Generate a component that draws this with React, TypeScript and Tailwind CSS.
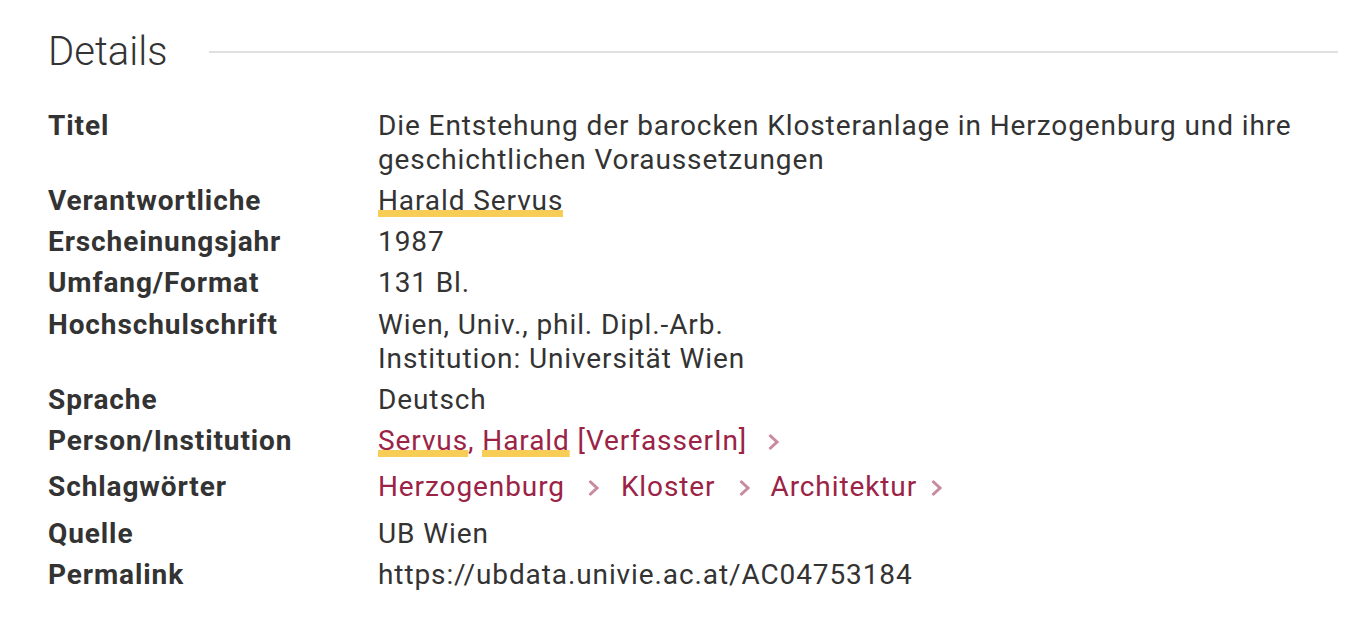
import { ReactNode } from "react";

const Chevron = ({ className = "" }: { className?: string }) => (
  <svg viewBox="0 0 13 18" className={`inline-block w-[13px] h-[18px] ${className}`} fill="none">
    <path d="M2.5 2 L10 9 L2.5 16" stroke="#c98a9d" strokeWidth="3" />
  </svg>
);

const Mark = ({ children }: { children: ReactNode }) => (
  <span className="bg-[linear-gradient(#f7cd55,#f7cd55)] bg-no-repeat bg-bottom bg-[length:100%_7px]">
    {children}
  </span>
);

const Row = ({ label, children, className = "" }: { label: string; children: ReactNode; className?: string }) => (
  <div className={`flex ${className}`}>
    <div className="w-[330px] shrink-0 font-bold">{label}</div>
    <div className="flex-1">{children}</div>
  </div>
);

export default function App() {
  return (
    <div
      className="min-h-screen bg-white pl-[48px] pr-[32px] pt-[28px] text-[#333333] text-[28px] leading-[34px] tracking-[0.9px]"
      style={{ fontFamily: "Roboto, 'Liberation Sans', sans-serif" }}
    >
      {/* Heading */}
      <div className="flex items-center h-[48px]">
        <h2 className="text-[40px] font-light leading-[48px] tracking-normal text-[#333333]">Details</h2>
        <div className="flex-1 ml-[42px] h-[2px] bg-[#e0e0e0]" />
      </div>

      <div className="mt-[32.5px] flex flex-col gap-[7.25px]">
        <Row label="Titel">
          Die Entstehung der barocken Klosteranlage in Herzogenburg und ihre
          <br />
          geschichtlichen Voraussetzungen
        </Row>
        <Row label="Verantwortliche">
          <Mark>Harald Servus</Mark>
        </Row>
        <Row label="Erscheinungsjahr">1987</Row>
        <Row label="Umfang/Format">131 Bl.</Row>
        <Row label="Hochschulschrift">
          Wien, Univ., phil. Dipl.-Arb.
          <br />
          Institution: Universität Wien
        </Row>
        <Row label="Sprache">Deutsch</Row>
        <Row label="Person/Institution">
          <span className="text-[#9b2346]">
            <Mark>Servus</Mark>, <Mark>Harald</Mark> [VerfasserIn]
          </span>
          <Chevron className="ml-[20px] align-[-1px]" />
        </Row>
        <Row label="Schlagwörter" className="py-[5px]">
          <span className="text-[#9b2346]">Herzogenburg</span>
          <Chevron className="ml-[22px] align-[-1px]" />
          <span className="text-[#9b2346] ml-[21px]">Kloster</span>
          <Chevron className="ml-[22px] align-[-1px]" />
          <span className="text-[#9b2346] ml-[20px]">Architektur</span>
          <Chevron className="ml-[13px] align-[-1px]" />
        </Row>
        <Row label="Quelle">UB Wien</Row>
        <Row label="Permalink">https://ubdata.univie.ac.at/AC04753184</Row>
      </div>
    </div>
  );
}
